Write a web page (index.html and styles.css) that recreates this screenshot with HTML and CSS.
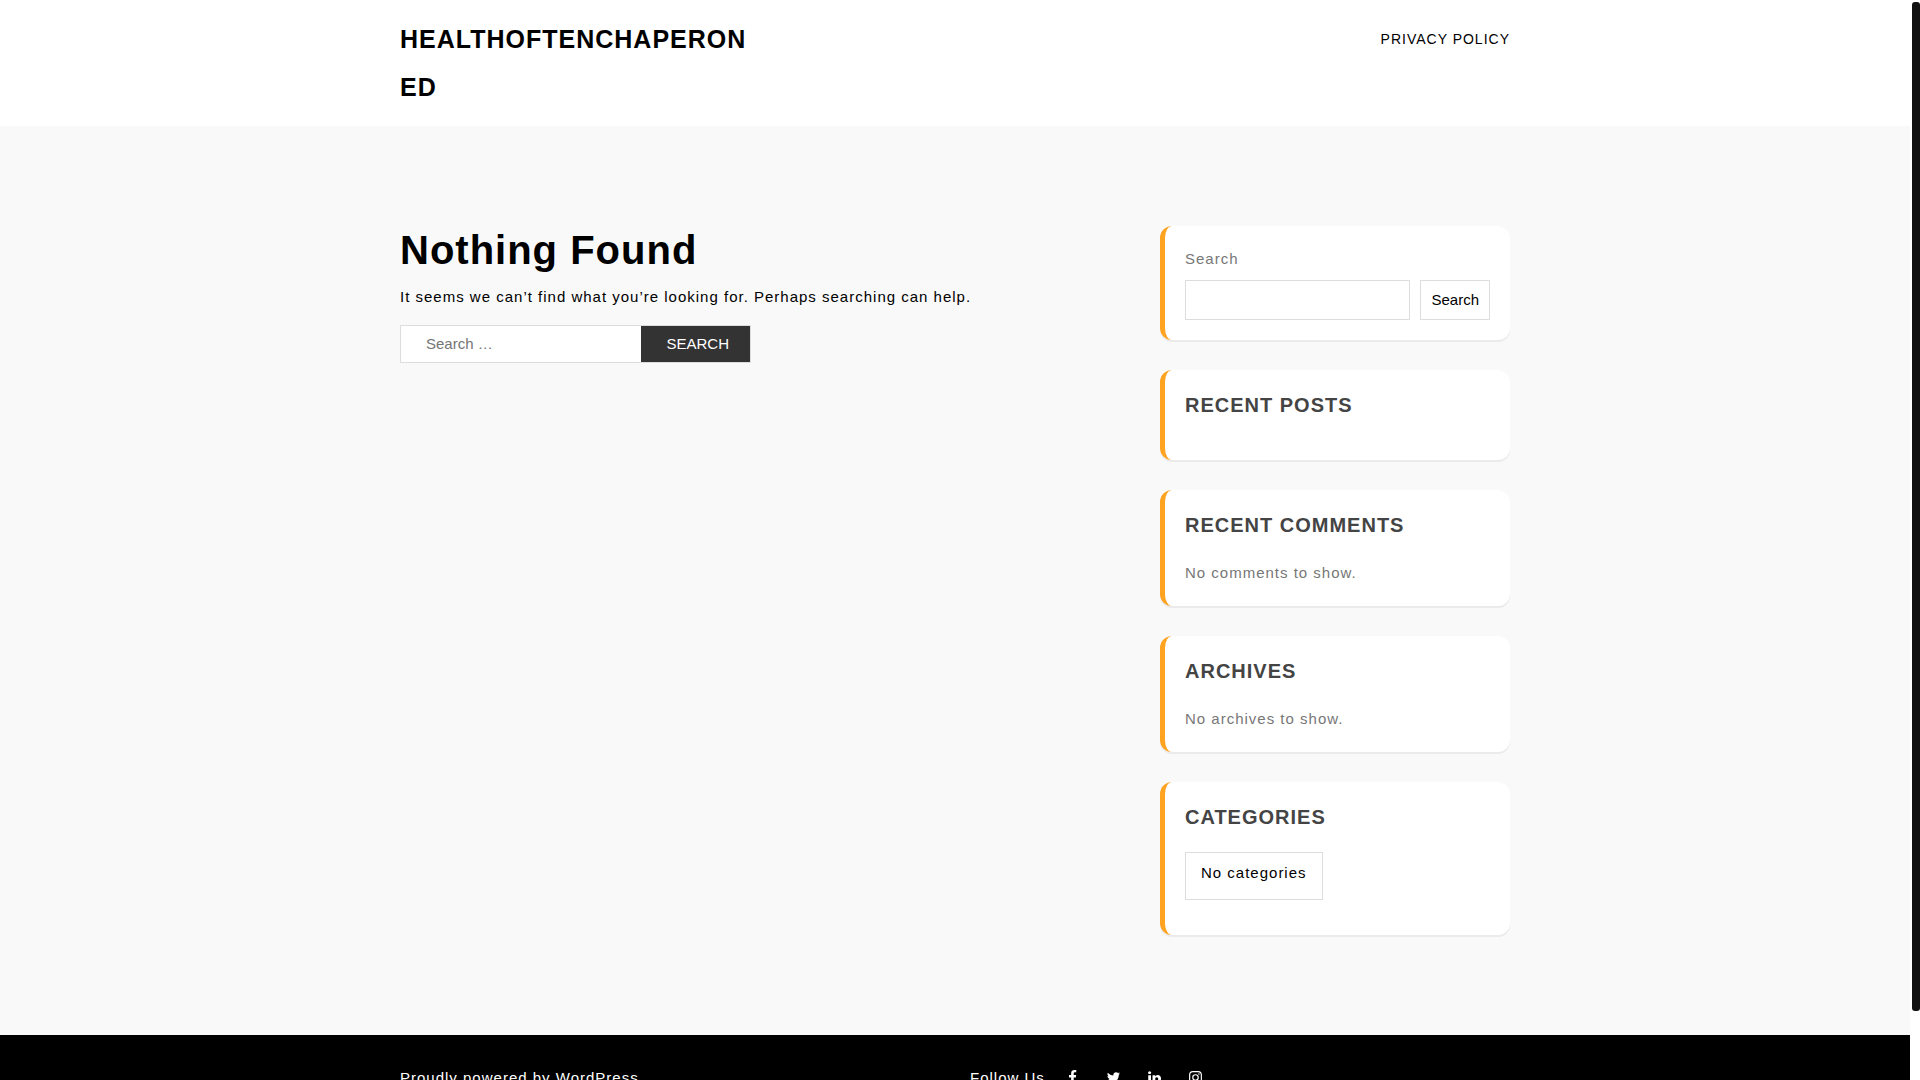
FILE: index.html
```html
<!DOCTYPE html>
<html lang="en">
<head>
    <meta charset="UTF-8">
    <meta name="viewport" content="width=device-width, initial-scale=1">
    <title>Nothing Found - healthoftenchaperoned</title>
    <link rel="stylesheet" href="styles.css">
</head>
<body>
    <div class="page">
        <header class="site-header">
            <div class="container header-row">
                <a class="site-title" href="#">healthoftenchaperoned</a>
                <nav class="main-nav">
                    <a href="#">Privacy Policy</a>
                </nav>
            </div>
        </header>

        <div class="container content-row">
            <main class="content">
                <h1 class="page-title">Nothing Found</h1>
                <p>It seems we can’t find what you’re looking for. Perhaps searching can help.</p>
                <form class="search-form">
                    <input type="search" class="search-field" placeholder="Search …" aria-label="Search for">
                    <button type="submit" class="search-submit">Search</button>
                </form>
            </main>

            <aside class="sidebar">
                <section class="widget">
                    <form>
                        <label class="widget-label" for="widget-search">Search</label>
                        <div class="widget-search">
                            <input type="search" id="widget-search">
                            <button type="submit">Search</button>
                        </div>
                    </form>
                </section>
                <section class="widget">
                    <h2>Recent Posts</h2>
                </section>
                <section class="widget">
                    <h2>Recent Comments</h2>
                    <p>No comments to show.</p>
                </section>
                <section class="widget">
                    <h2>Archives</h2>
                    <p>No archives to show.</p>
                </section>
                <section class="widget">
                    <h2>Categories</h2>
                    <ul class="categories">
                        <li>No categories</li>
                    </ul>
                </section>
            </aside>
        </div>

        <footer class="site-footer">
            <div class="container footer-row">
                <a href="#">Proudly powered by WordPress</a>
                <div class="social">
                    <span>Follow Us</span>
                    <ul>
                        <li><a href="#" aria-label="Facebook"><svg viewBox="0 0 1792 1792"><path d="M1343 12v264h-157q-86 0-116 36t-30 108v189h293l-39 296h-254v759h-306v-759h-255v-296h255v-218q0-186 104-288.5t277-102.5q147 0 228 12z"/></svg></a></li>
                        <li><a href="#" aria-label="Twitter"><svg viewBox="0 0 1792 1792"><path d="M1684 408q-67 98-162 167 1 14 1 42 0 130-38 259.5t-115.5 248.5-184.5 210.5-258 146-323 54.5q-271 0-496-145 35 4 78 4 225 0 401-138-105-2-188-64.5t-114-159.5q33 5 61 5 43 0 85-11-112-23-185.5-111.5t-73.5-205.5v-4q68 38 146 41-66-44-105-115t-39-154q0-88 44-163 121 149 294.5 238.5t371.5 99.5q-8-38-8-74 0-134 94.5-228.5t228.5-94.5q140 0 236 102 109-21 205-78-37 115-142 178 93-10 186-50z"/></svg></a></li>
                        <li><a href="#" aria-label="LinkedIn"><svg viewBox="0 0 1792 1792"><path d="M477 625v991h-330v-991h330zm21-306q1 73-50.5 122t-135.5 49h-2q-82 0-132-49t-50-122q0-74 51.5-122.5t134.5-48.5 133 48.5 51 122.5zm1166 729v568h-329v-530q0-105-40.5-164.5t-126.5-59.5q-63 0-105.5 34.5t-63.5 85.5q-11 30-11 81v553h-329q2-399 2-647t-1-296l-1-48h329v144h-2q20-32 41-56t56.5-52 87-43.5 114.5-15.5q171 0 284 113.5t113 332.5z"/></svg></a></li>
                        <li><a href="#" aria-label="Instagram"><svg viewBox="0 0 1792 1792"><g fill="none" stroke="#fff" stroke-width="140"><rect x="198" y="198" width="1396" height="1396" rx="390"/><circle cx="896" cy="896" r="325"/></g><circle cx="1306" cy="486" r="92"/></svg></a></li>
                    </ul>
                </div>
            </div>
        </footer>
    </div>
    <div class="scroll-rail"><div class="scroll-thumb"></div></div>
</body>
</html>
```
FILE: styles.css
```css
* {
    box-sizing: border-box;
}

body {
    margin: 0;
    background: #f9f9f9;
    color: #000;
    font-family: "Liberation Sans", Arial, sans-serif;
    font-size: 15px;
    line-height: 26px;
    letter-spacing: 1px;
}

a {
    color: inherit;
    text-decoration: none;
}

p {
    margin: 0 0 15px;
}

ul {
    list-style: none;
    margin: 0;
    padding: 0;
}

input, button {
    font-family: inherit;
    font-size: 15px;
    border-radius: 0;
    margin: 0;
}

.page {
    height: 100vh;
    margin-right: 10px;
    overflow: hidden;
}

.container {
    max-width: 1140px;
    margin: 0 auto;
    padding: 0 15px;
}

/* Header */
.site-header {
    background: #fff;
    padding: 15px 0;
}

.header-row {
    display: flex;
    justify-content: space-between;
    align-items: flex-start;
}

.site-title {
    width: 350px;
    font-size: 25px;
    font-weight: bold;
    line-height: 48px;
    text-transform: uppercase;
    overflow-wrap: anywhere;
}

.main-nav {
    font-size: 14px;
    line-height: 48px;
    text-transform: uppercase;
}

/* Content and sidebar */
.content-row {
    display: grid;
    grid-template-columns: 1fr 350px;
    gap: 30px;
    padding-top: 100px;
    padding-bottom: 100px;
}

.page-title {
    margin: 0 0 10px;
    font-size: 40px;
    line-height: 48px;
}

.search-form {
    display: flex;
    width: 351px;
    border: 1px solid #ddd;
}

.search-field {
    flex: 1;
    min-width: 0;
    height: 36px;
    padding: 0 25px 2px;
    border: 0;
    background: #fff;
}

.search-submit {
    padding: 0 21px 2px 25px;
    border: 0;
    background: #333;
    color: #fff;
    text-transform: uppercase;
}

.sidebar {
    display: flex;
    flex-direction: column;
    gap: 30px;
}

.widget {
    padding: 20px;
    background: #fff;
    border-left: 5px solid #ffa320;
    border-radius: 12px;
    box-shadow: 0 2px 0 #ebebeb;
    color: #777;
}

.widget h2 {
    margin: 0 0 20px;
    color: #444;
    font-size: 20px;
    line-height: 30px;
    text-transform: uppercase;
}

.widget p {
    margin: 0;
}

.widget-label {
    display: block;
    margin-bottom: 8px;
}

.widget-search {
    display: flex;
    gap: 10px;
}

.widget-search input {
    flex: 1;
    min-width: 0;
    height: 40px;
    border: 1px solid #ddd;
}

.widget-search button {
    padding: 0 10px 2px;
    border: 1px solid #ddd;
    background: #fff;
    color: #000;
}

.categories li {
    width: fit-content;
    margin-bottom: 15px;
    padding: 7px 15px 13px;
    border: 1px solid #ddd;
    color: #000;
}

/* Footer */
.site-footer {
    padding: 30px 0;
    background: #000;
    color: #fff;
}

.footer-row {
    display: grid;
    grid-template-columns: 1fr 1fr;
    gap: 30px;
}

.social {
    display: flex;
    gap: 20px;
}

.social ul {
    display: flex;
    gap: 26px;
}

.social svg {
    display: block;
    width: 15px;
    height: 15px;
    margin-top: 5px;
    fill: #fff;
}

/* Scroll rail */
.scroll-rail {
    position: fixed;
    top: 0;
    right: 0;
    width: 10px;
    height: 100vh;
    padding: 2px 0 0 2px;
    background: #fff;
}

.scroll-thumb {
    height: calc(100% - 69px);
    background: #111;
    border-radius: 3px;
}
```
